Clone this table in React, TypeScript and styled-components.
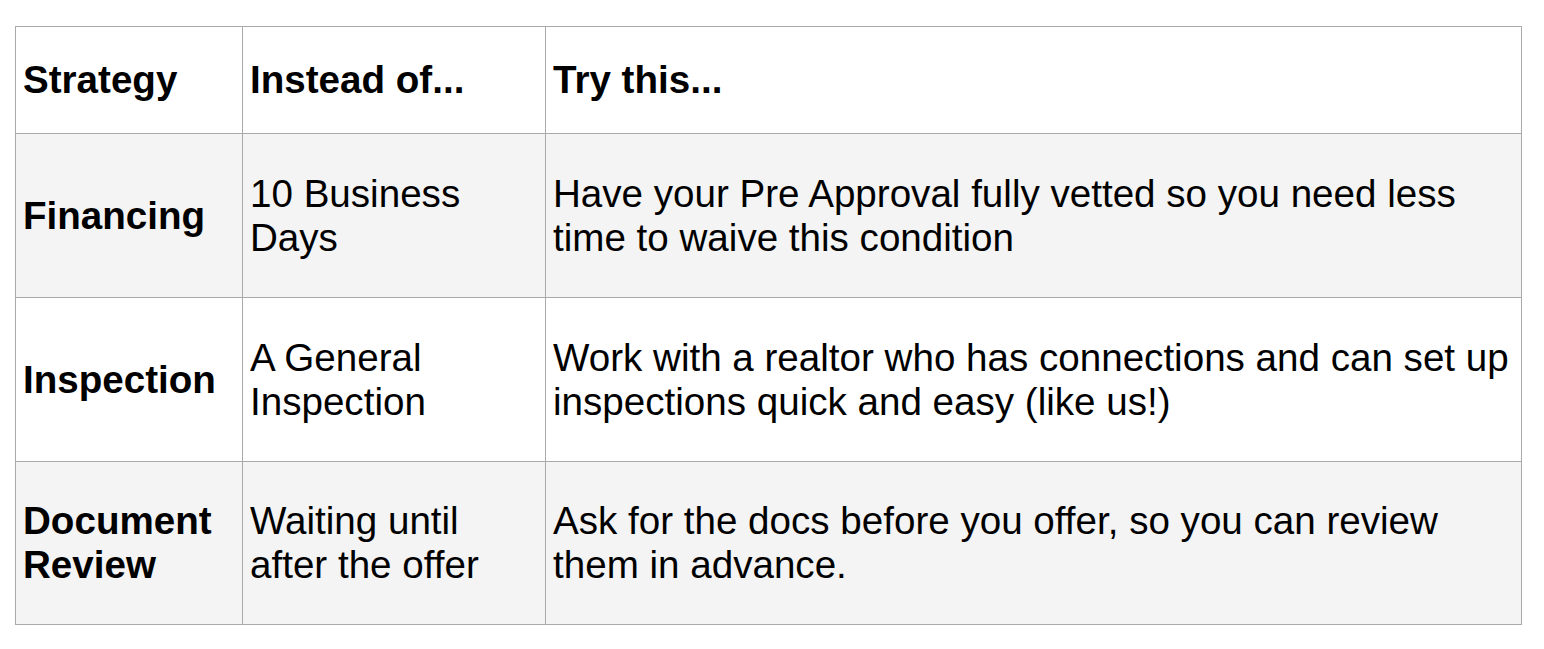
import React from 'react';
import styled, { createGlobalStyle } from 'styled-components';

const GlobalStyle = createGlobalStyle`
    body {
        margin: 0;
        background: #fff;
        font-family: "Liberation Sans", Arial, sans-serif;
        color: #000;
    }
`;

const Page = styled.div`
    padding: 26px 15px;
`;

const Table = styled.table`
    border-collapse: collapse;
    width: 1507px;
    table-layout: fixed;
    font-size: 38.6px;
`;

const Row = styled.tr<{ $shaded?: boolean; $height: number }>`
    height: ${(p) => p.$height}px;
    background-color: ${(p) => (p.$shaded ? '#f4f4f4' : '#fff')};
`;

const Cell = styled.td<{ $bold?: boolean }>`
    border: 1px solid #aaaaaa;
    padding: 0 7px;
    vertical-align: middle;
    font-weight: ${(p) => (p.$bold ? 'bold' : 'normal')};
    line-height: 44px;
`;

const rows = [
    {
        strategy: 'Financing',
        instead: '10 Business Days',
        tryThis: 'Have your Pre Approval fully vetted so you need less time to waive this condition',
        height: 164,
    },
    {
        strategy: 'Inspection',
        instead: 'A General Inspection',
        tryThis: 'Work with a realtor who has connections and can set up inspections quick and easy (like us!)',
        height: 164,
    },
    {
        strategy: 'Document Review',
        instead: 'Waiting until after the offer',
        tryThis: 'Ask for the docs before you offer, so you can review them in advance.',
        height: 163,
    },
];

function App() {
    return (
        <>
            <GlobalStyle />
            <Page>
                <Table>
                    <colgroup>
                        <col style={{ width: 227 }} />
                        <col style={{ width: 303 }} />
                        <col />
                    </colgroup>
                    <tbody>
                        <Row $height={107}>
                            <Cell $bold>Strategy</Cell>
                            <Cell $bold>Instead of...</Cell>
                            <Cell $bold>Try this...</Cell>
                        </Row>
                        {rows.map((r, i) => (
                            <Row key={r.strategy} $shaded={i % 2 === 0} $height={r.height}>
                                <Cell $bold>{r.strategy}</Cell>
                                <Cell>{r.instead}</Cell>
                                <Cell>{r.tryThis}</Cell>
                            </Row>
                        ))}
                    </tbody>
                </Table>
            </Page>
        </>
    );
}

export default App;
